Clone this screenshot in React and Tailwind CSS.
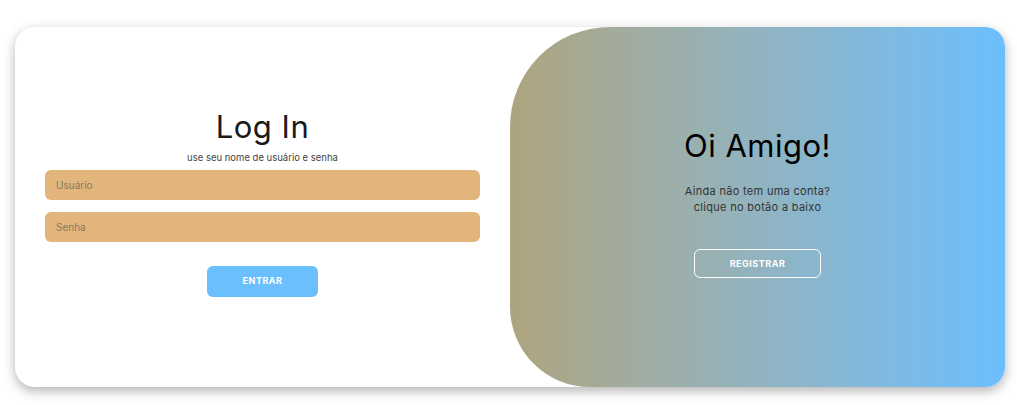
export default function App() {
  const font = { fontFamily: "Inter, 'Noto Sans', sans-serif" };
  return (
    <div className="w-[1017px] h-[405px] bg-white pt-[27px] pl-[15px]" style={font}>
      <div className="w-[990px] h-[360px] bg-white rounded-[20px] shadow-[0_4px_12px_rgba(0,0,0,0.3)] flex overflow-hidden">
        <div className="w-[495px] h-full flex flex-col items-center justify-center px-[30px] pb-[8px]">
          <h1 className="text-[31px] leading-[36px] text-[#1a1a1a] font-normal tracking-[0.5px]">Log In</h1>
          <p className="text-[9.5px] text-[#444] mt-[6px] mb-[4px]">use seu nome de usuário e senha</p>
          <input
            placeholder="Usuário"
            className="w-full h-[30px] rounded-[6px] bg-[#e2b57c] px-[11px] text-[10px] placeholder:text-[#8a7a62] outline-none"
          />
          <input
            placeholder="Senha"
            className="w-full h-[30px] rounded-[6px] bg-[#e2b57c] px-[11px] text-[10px] placeholder:text-[#8a7a62] outline-none mt-[12px]"
          />
          <button className="mt-[24px] w-[111px] h-[31px] rounded-[6px] bg-[#6bbffc] text-white text-[9px] font-bold tracking-[0.5px]">
            ENTRAR
          </button>
        </div>
        <div className="w-[495px] h-full rounded-tl-[100px] rounded-bl-[80px] bg-gradient-to-r from-[#aea47e] to-[#6bbffd] flex flex-col items-center justify-center">
          <h1 className="text-[31px] leading-[36px] text-black font-normal tracking-[0.5px] -mt-[8px]">Oi Amigo!</h1>
          <p className="text-[11px] leading-[16px] text-[#333] text-center mt-[19px] tracking-[0.3px]">
            Ainda não tem uma conta?
            <br />
            clique no botão a baixo
          </p>
          <button className="mt-[34px] w-[127px] h-[29px] rounded-[6px] border border-white text-white text-[9px] font-bold tracking-[0.5px]">
            REGISTRAR
          </button>
        </div>
      </div>
    </div>
  );
}
